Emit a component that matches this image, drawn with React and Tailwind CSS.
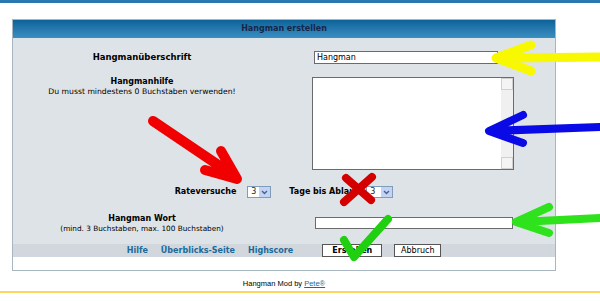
import React from 'react';

const Select = ({ w }) => (
  <div className={`flex h-[12px] ${w} items-stretch border border-[#7f9db9] bg-white`}>
    <span className="flex-1 pl-[3px] text-[8px] leading-[10px] text-[#222]">3</span>
    <span className="flex w-[11px] items-center justify-center bg-[#c3d3f5]">
      <svg width="7" height="5" viewBox="0 0 7 5">
        <path d="M1 1 L3.5 3.5 L6 1" fill="none" stroke="#4d6185" strokeWidth="1.4" />
      </svg>
    </span>
  </div>
);

// doodles drawn over the screenshot
const Marks = () => (
  <svg className="pointer-events-none absolute left-0 top-0" width="600" height="301" viewBox="0 0 600 301">
    <g fill="none" strokeLinecap="round" strokeLinejoin="round">
      <path d="M600 57 L498 58 M531 45 L496 58 L531 71" stroke="#f8f800" strokeWidth="9" />
      <path d="M600 127 L491 131 M523 115 L489 131 L523 143" stroke="#0a0ae6" strokeWidth="8" />
      <path d="M600 218 L519 222 M549 207 L516 222 L549 233" stroke="#2ee21c" strokeWidth="8" />
      <path d="M153 121 L233 175 M205 170 L237 179 L221 151" stroke="#f00000" strokeWidth="10" />
      <path d="M346 178 L371 200 M372 177 L344 202" stroke="#d40000" strokeWidth="8" />
      <path d="M344 240 L354 257 L388 219" stroke="#20d010" strokeWidth="8" />
    </g>
  </svg>
);

const App = () => {
  return (
    <div className="relative h-[301px] w-[600px] overflow-hidden bg-white font-['DejaVu_Sans',Verdana,sans-serif] text-black">
      <div className="h-[3px] bg-[#2a78ad]" />

      <div className="ml-[12px] mt-[16px] w-[544px] border border-[#a8b6c1] bg-white">
        <div className="flex h-[18px] items-center justify-center bg-gradient-to-b from-[#0a6399] to-[#3a8fc2] text-[8px] font-bold text-[#16264a]">
          Hangman erstellen
        </div>

        <div className="h-[206px] bg-[#dee3e7] pt-[13px]">
          <div className="flex h-[13px] items-center">
            <div className="w-[258px] text-center text-[8.5px] font-bold">Hangmanüberschrift</div>
            <input
              readOnly
              value="Hangman"
              className="ml-[43px] h-[13px] w-[184px] border border-[#6b6b6b] bg-white px-[2px] text-[8px] leading-[11px] text-black outline-none"
            />
          </div>

          <div className="mt-[13px] flex items-start">
            <div className="w-[258px] text-center">
              <div className="-mt-[1px] text-[8px] font-bold leading-[11px]">Hangmanhilfe</div>
              <div className="text-[7.7px] leading-[10px]">Du musst mindestens 0 Buchstaben verwenden!</div>
            </div>
            <div className="ml-[41px] flex h-[93px] w-[202px] border border-[#6b6b6b] bg-white">
              <div className="flex-1" />
              <div className="flex w-[12px] flex-col justify-between bg-[#f0f0f0]">
                <div className="h-[12px] border border-[#d0d0d0] bg-[#f4f4f4]" />
                <div className="h-[12px] border border-[#d0d0d0] bg-[#f4f4f4]" />
              </div>
            </div>
          </div>

          <div className="mt-[16px] flex h-[12px] items-center justify-center">
            <span className="text-[8px] font-bold">Rateversuche</span>
            <div className="ml-[11px]"><Select w="w-[24px]" /></div>
            <span className="ml-[18px] text-[8px] font-bold">Tage bis Ablauf</span>
            <div className="ml-[8px]"><Select w="w-[27px]" /></div>
          </div>

          <div className="mt-[15px] flex items-start">
            <div className="w-[258px] text-center">
              <div className="text-[8px] font-bold leading-[11px]">Hangman Wort</div>
              <div className="text-[7.3px] leading-[10px]">(mind. 3 Buchstaben, max. 100 Buchstaben)</div>
            </div>
            <div className="ml-[44px] mt-[4px] h-[12px] w-[198px] border border-[#6b6b6b] bg-white" />
          </div>
        </div>

        <div className="flex h-[13px] items-center justify-center bg-[#d1d7dc] text-[8px] font-bold text-[#1d6a9a]">
          <span>Hilfe</span>
          <span className="ml-[13px]">Überblicks-Seite</span>
          <span className="ml-[13px]">Highscore</span>
          <div className="ml-[29px] flex h-[13px] w-[60px] items-center justify-center border border-[#555] bg-white text-[8px] font-bold text-black">
            Erstellen
          </div>
          <div className="ml-[12px] flex h-[13px] w-[47px] items-center justify-center border border-[#555] bg-white text-[8px] font-normal text-black">
            Abbruch
          </div>
        </div>

        <div className="h-[13px] bg-white" />
      </div>

      <div className="ml-[12px] mt-[8px] w-[544px] text-center font-['Liberation_Sans',Arial,sans-serif] text-[7.5px] leading-[9px] text-black">
        Hangman Mod by <span className="text-[#1d6a9a] underline">Pete®</span>
      </div>
      <div className="mt-[3px] h-[2px] bg-[#ffd65c]" />

      <Marks />
    </div>
  );
};

export default App;
